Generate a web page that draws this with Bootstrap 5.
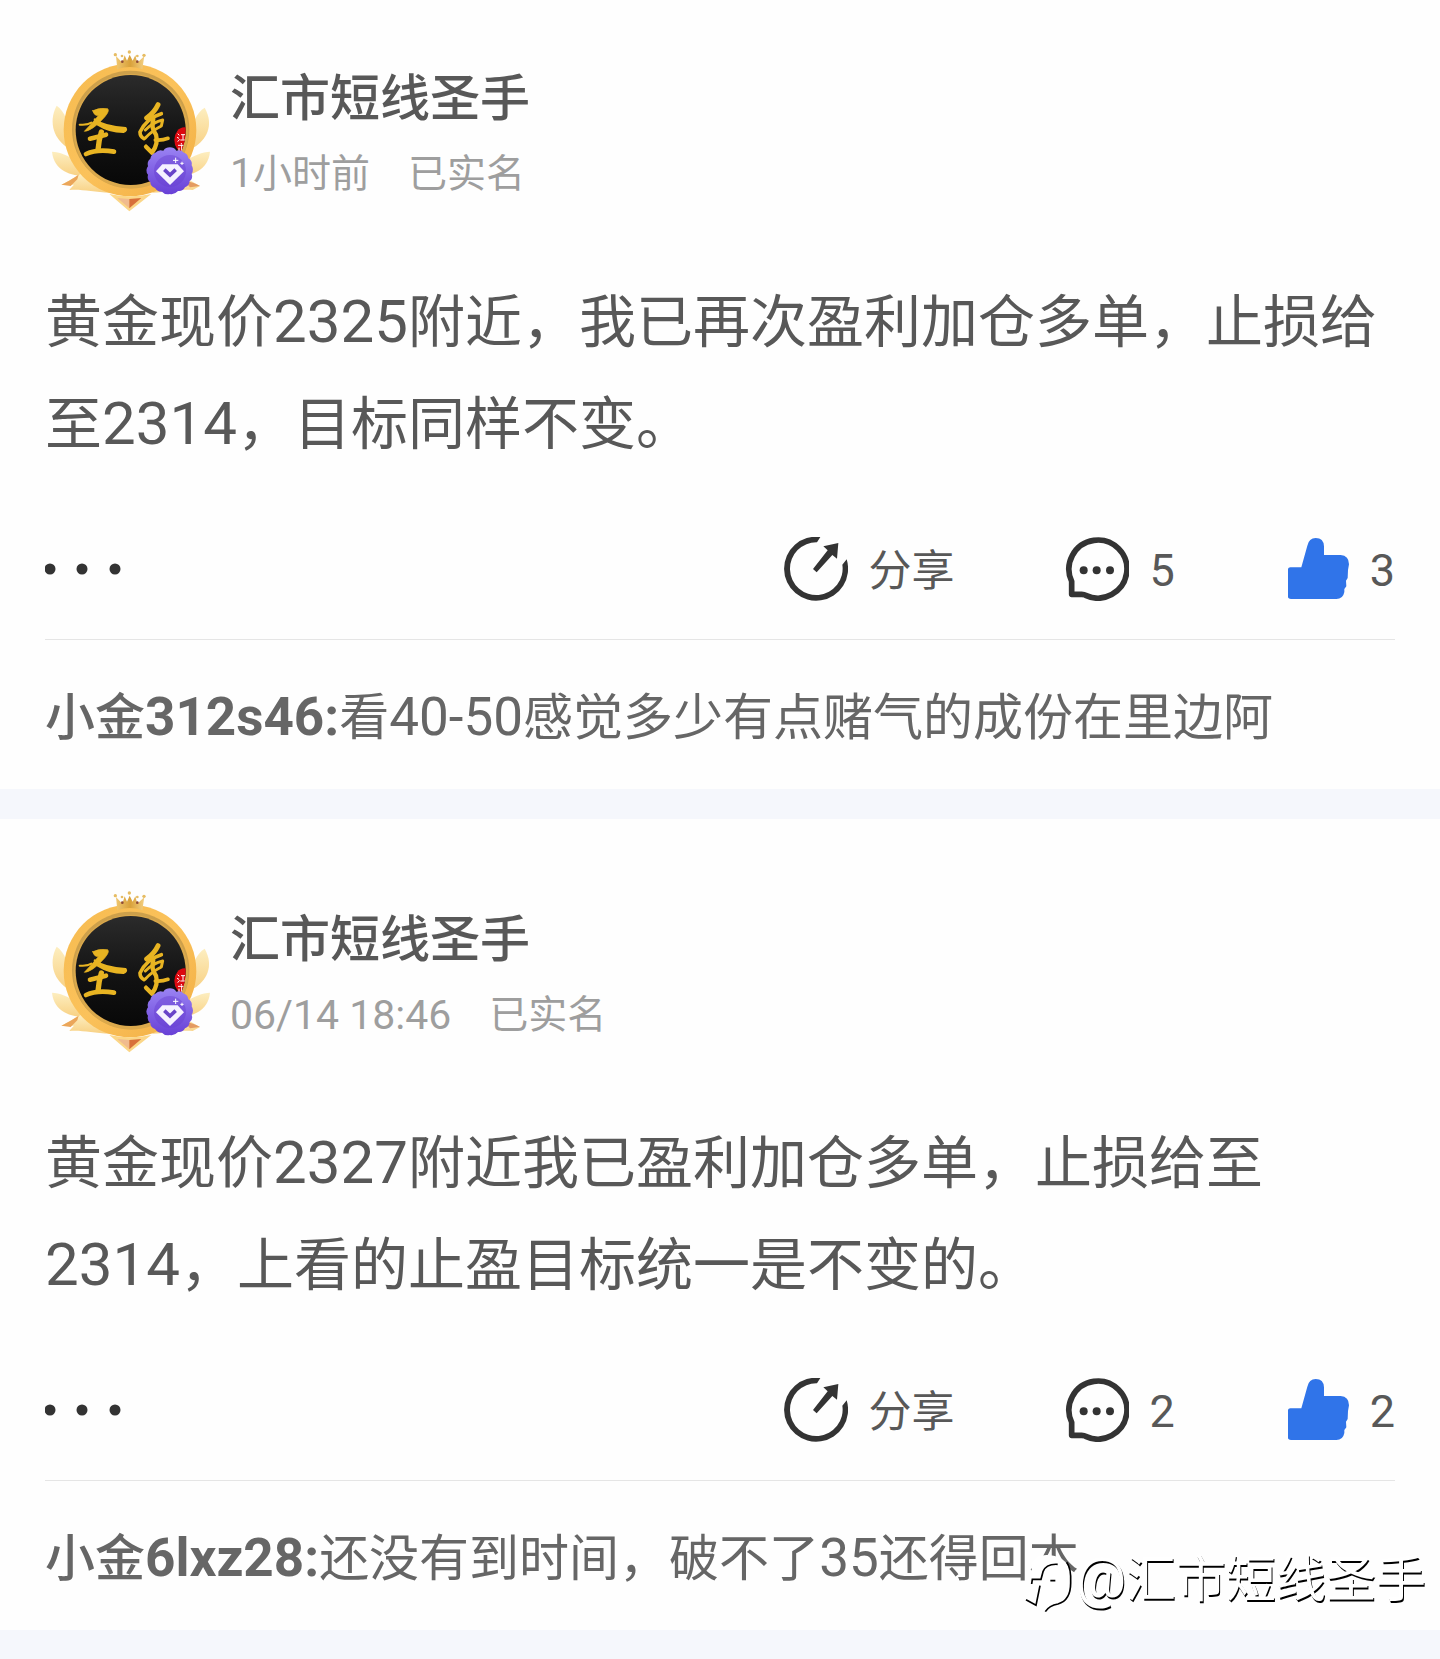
<!DOCTYPE html>
<html lang="zh-CN">
<head>
<meta charset="utf-8">
<meta name="viewport" content="width=device-width, initial-scale=1">
<title>汇市短线圣手</title>
<link rel="stylesheet" href="https://cdn.jsdelivr.net/npm/bootstrap@5.3.0/dist/css/bootstrap.min.css">
<style>
body { font-family: Roboto, "Noto Sans CJK SC", sans-serif; background: #f5f7fc; color: #585858; }
.feed { gap: 30px; padding-bottom: 29px; }
.post { background: #fefefe; padding: 68px 45px 0; }
.post:first-of-type { padding-top: 46px; }
.avatar { width: 170px; height: 170px; flex: none; }
.author { gap: 15px; }
.author-text { padding-top: 11px; }
.author-name { font-size: 50px; line-height: 75px; font-weight: 500; }
.post-meta { font-size: 39px; line-height: 75px; color: #9e9e9e; gap: 38px; }
.post-meta .latin { font-size: 41px; }
.post-text { font-size: 57px; line-height: 102px; margin: 56px 0 61px; }
.post-text .latin { font-size: 60px; }
.latin { line-height: 1; }
.actions { gap: 111px; padding-bottom: 38px; border-bottom: 1px solid #e5e5e5; }
.action { gap: 20px; font-size: 45px; color: #585858; }
.action span { line-height: 60px; padding-top: 4px; }
.action-label { font-size: 43px; }
.icon { width: 64px; height: 64px; flex: none; }
.icon-more { width: 76px; height: 12px; }
.reply { font-size: 50px; line-height: 75px; padding: 41px 0 33px; color: #666; }
.reply .latin { font-size: 53px; }
.reply-name { font-weight: 500; }
.reply-name .latin { font-weight: 700; }
.watermark { right: 14px; bottom: 12px; font-size: 50px; line-height: 75px; color: #fff; text-shadow: 1px 2px 0 #000; }
.watermark .latin { font-size: 56px; }
.watermark svg { width: 52px; height: 64px; margin-top: 8px; }
</style>
<script src="https://cdn.jsdelivr.net/npm/bootstrap@5.3.0/dist/js/bootstrap.bundle.min.js"></script>
</head>
<body>
<svg class="position-absolute" width="0" height="0" aria-hidden="true">
  <defs>
    <linearGradient id="gold" x1="0" y1="0" x2="1" y2="1"><stop offset="0" stop-color="#f6bb50"/><stop offset=".5" stop-color="#fbc25b"/><stop offset="1" stop-color="#f1ad42"/></linearGradient>
    <linearGradient id="wing" x1="0" y1="0" x2="0" y2="1"><stop offset="0" stop-color="#fdeec0"/><stop offset="1" stop-color="#f8d184"/></linearGradient>
    <linearGradient id="crown" x1="0" y1="0" x2="1" y2="0"><stop offset="0" stop-color="#efc771"/><stop offset=".5" stop-color="#d9a13a"/><stop offset="1" stop-color="#f3cf82"/></linearGradient>
    <linearGradient id="violet" x1="0" y1="0" x2="0" y2="1"><stop offset="0" stop-color="#9a83f3"/><stop offset="1" stop-color="#6840d6"/></linearGradient>
    <linearGradient id="ink" x1="0" y1="0" x2="0" y2="1"><stop offset="0" stop-color="#2b2b2b"/><stop offset=".6" stop-color="#111"/><stop offset="1" stop-color="#080808"/></linearGradient>
    <clipPath id="disc"><circle cx="302" cy="270" r="165"/></clipPath>
  </defs>
  <symbol id="avatar" viewBox="45 18 510 510">
    <g fill="url(#wing)">
      <path d="M80 197C104 214 116 245 124 300L112 322C76 300 52 250 80 197Z"/>
      <path d="M66 335C88 336 116 346 138 362L172 408C120 408 72 392 66 335Z"/>
      <path d="M94 434C116 424 136 410 152 402C180 420 214 440 240 458C190 456 150 446 118 450C124 442 128 438 132 434Z"/>
      <path d="M94 434C116 424 136 410 146 404L142 418L122 438Z" fill="#eba65a"/>
      <path d="M524 203C500 218 486 248 478 300L492 322C528 300 554 256 524 203Z"/>
      <path d="M540 335C518 336 490 346 468 362L434 408C486 408 534 392 540 335Z"/>
      <path d="M510 438C490 428 470 414 454 402C426 420 392 440 366 458C416 456 456 446 488 450Z"/>
      <path d="M510 438C490 428 480 424 466 426L480 442Z" fill="#e49b62"/>
    </g>
    <circle cx="300" cy="270" r="199" fill="url(#gold)"/>
    <circle cx="302" cy="268" r="176" fill="#cda04b"/>
    <circle cx="303" cy="274" r="172" fill="#dba94c"/>
    <circle cx="302" cy="270" r="165" fill="url(#ink)"/>
    <path d="M262 88L258 48L277 68L284 46L291 62L299 44L308 62L316 46L322 68L343 48L337 88Q300 74 262 88Z" fill="url(#crown)"/>
    <g fill="#e6bc63"><circle cx="256" cy="44" r="5"/><circle cx="276" cy="48" r="4"/><circle cx="298" cy="36" r="5"/><circle cx="322" cy="48" r="4"/><circle cx="342" cy="46" r="5"/></g>
    <g fill="#8f4a33"><circle cx="277" cy="65" r="4"/><circle cx="322" cy="65" r="4"/></g>
    <path d="M238 462Q300 476 364 462L298 514Z" fill="#fbd687"/>
    <path d="M262 474L298 477V505Z" fill="#f0bb8e"/><path d="M298 477L334 474L298 505Z" fill="#d8703a"/>
    <g fill="#e8b422" stroke="#e8b422" stroke-linecap="round" stroke-linejoin="round" clip-path="url(#disc)">
      <path d="M188 212Q208 202 233 206Q240 212 224 231Q208 250 190 263Q174 274 163 274Q184 252 206 226Q194 230 188 212Z" stroke-width="2"/>
      <path d="M149 254Q172 256 184 248M194 238Q224 261 287 264Q292 271 280 276Q238 276 202 253Z" stroke-width="6"/>
      <path d="M180 296L228 284" fill="none" stroke-width="14"/>
      <path d="M214 276Q206 302 204 330" fill="none" stroke-width="16"/>
      <path d="M168 342Q202 326 252 335" fill="none" stroke-width="14"/>
      <path d="M384 194Q374 216 350 234" fill="none" stroke-width="15"/>
      <path d="M394 221Q350 234 330 276Q330 290 342 296" fill="none" stroke-width="11"/>
      <path d="M346 270Q370 246 398 240L394 258Q366 272 346 294" fill="none" stroke-width="9"/>
      <path d="M370 238Q362 262 378 284Q386 312 366 338L348 320" fill="none" stroke-width="13"/>
      <path d="M376 300Q396 302 414 295" fill="none" stroke-width="11"/>
    </g>
    <g clip-path="url(#disc)"><ellipse cx="463" cy="300" rx="30" ry="38" fill="#dc0910"/><path d="M443 281l5 5M441 292l6 3M443 305l6-7M453 284h12M459 284v15M451 300h16M454 309v4M444 316h21M447 323v16M455 314v27" stroke="#fff" stroke-width="3" fill="none"/></g>
    <path d="M420 322Q432 322 439 332Q452 328 462 338Q474 342 475 355Q488 362 485 376Q493 389 485 401Q490 415 479 423Q478 437 465 442Q458 455 444 453Q433 465 420 462Q406 466 396 455Q382 456 375 444Q361 440 361 426Q350 418 354 404Q344 392 354 379Q350 364 361 356Q363 342 376 338Q386 327 400 332Q407 322 420 322Z" fill="url(#violet)"/>
    <circle cx="420" cy="393" r="48" fill="#6940d1" opacity=".45"/>
    <path d="M397 373H443L462 394L420 435L378 394Z" fill="#f5f1ff"/>
    <path d="M403 389L420 405L437 389" fill="none" stroke="#6843c8" stroke-width="11"/>
    <path d="M437 353V369M429 361H445M456 365V375M451 370H461" stroke="#fff" stroke-width="3"/>
  </symbol>
  <symbol id="share" viewBox="72 51 192 192">
    <path d="M181 51L171 67A79 79 0 1 0 247 134L260 118A96 96 0 1 1 181 51Z" fill="#333"/>
    <path d="M235 69L190 79L203 91L159 147L170 157L217 105L231 116Z" fill="#333"/>
  </symbol>
  <symbol id="comment" viewBox="78 51 192 192">
    <path d="M98 184A87 87 0 1 1 140 226Q136 223 128 223H98Z" fill="none" stroke="#333" stroke-width="17" stroke-linejoin="round"/>
    <g fill="#333"><circle cx="134" cy="151" r="12"/><circle cx="173" cy="151" r="12"/><circle cx="213" cy="151" r="12"/></g>
  </symbol>
  <symbol id="like" viewBox="738 51 192 192">
    <path d="M744 147Q745 142 751 142H784L802 77Q807 54 827 54Q851 54 852 79V105H902Q927 107 927 133L924 150L923 174L918 182L919 199L913 207V216Q909 237 889 237H753Q744 236 744 230Z" fill="#3074e9"/>
  </symbol>
  <symbol id="more" viewBox="0 0 76 12"><g fill="#333"><circle cx="5" cy="6" r="5.5"/><circle cx="37" cy="6" r="5.5"/><circle cx="70" cy="6" r="5.5"/></g></symbol>
</svg>

<main class="feed d-flex flex-column">
  <article class="post">
    <header class="author d-flex align-items-center">
      <svg class="avatar" role="img" aria-label="头像"><use href="#avatar"/></svg>
      <div class="author-text">
        <div class="author-name">汇市短线圣手</div>
        <div class="post-meta d-flex"><span><span class="latin">1</span>小时前</span><span>已实名</span></div>
      </div>
    </header>
    <p class="post-text">黄金现价<span class="latin">2325</span>附近，我已再次盈利加仓多单，止损给至<span class="latin">2314</span>，目标同样不变。</p>
    <div class="actions d-flex align-items-center">
      <button type="button" class="btn p-0 border-0 d-flex me-auto" aria-label="更多"><svg class="icon-more"><use href="#more"/></svg></button>
      <button type="button" class="action btn p-0 border-0 d-flex align-items-center"><svg class="icon"><use href="#share"/></svg><span class="action-label">分享</span></button>
      <button type="button" class="action btn p-0 border-0 d-flex align-items-center" aria-label="评论 5"><svg class="icon"><use href="#comment"/></svg><span>5</span></button>
      <button type="button" class="action btn p-0 border-0 d-flex align-items-center" aria-label="赞 3"><svg class="icon"><use href="#like"/></svg><span>3</span></button>
    </div>
    <p class="reply mb-0"><span class="reply-name">小金<span class="latin">312s46:</span></span>看<span class="latin">40-50</span>感觉多少有点赌气的成份在里边阿</p>
  </article>

  <article class="post position-relative">
    <header class="author d-flex align-items-center">
      <svg class="avatar" role="img" aria-label="头像"><use href="#avatar"/></svg>
      <div class="author-text">
        <div class="author-name">汇市短线圣手</div>
        <div class="post-meta d-flex"><span class="latin align-self-center">06/14 18:46</span><span>已实名</span></div>
      </div>
    </header>
    <p class="post-text">黄金现价<span class="latin">2327</span>附近我已盈利加仓多单，止损给至<span class="latin">2314</span>，上看的止盈目标统一是不变的。</p>
    <div class="actions d-flex align-items-center">
      <button type="button" class="btn p-0 border-0 d-flex me-auto" aria-label="更多"><svg class="icon-more"><use href="#more"/></svg></button>
      <button type="button" class="action btn p-0 border-0 d-flex align-items-center"><svg class="icon"><use href="#share"/></svg><span class="action-label">分享</span></button>
      <button type="button" class="action btn p-0 border-0 d-flex align-items-center" aria-label="评论 2"><svg class="icon"><use href="#comment"/></svg><span>2</span></button>
      <button type="button" class="action btn p-0 border-0 d-flex align-items-center" aria-label="赞 2"><svg class="icon"><use href="#like"/></svg><span>2</span></button>
    </div>
    <p class="reply mb-0"><span class="reply-name">小金<span class="latin">6lxz28:</span></span>还没有到时间，破不了<span class="latin">35</span>还得回本</p>
    <div class="watermark position-absolute d-flex align-items-center">
      <svg viewBox="66 72 156 192" aria-hidden="true">
        <path d="M90 100Q100 76 140 78Q204 82 208 150Q208 210 166 226Q144 230 130 250L100 228L72 212L88 170Z" fill="#fff"/>
        <path d="M167 106Q132 104 123 128L117 151H91L89 165M114 170L102 229L72 212M145 155H160M194 100Q208 118 206 162Q206 214 168 225Q142 229 130 248" fill="none" stroke="#000" stroke-width="5"/>
      </svg>
      <span><span class="latin">@</span>汇市短线圣手</span>
    </div>
  </article>
</main>
</body>
</html>
